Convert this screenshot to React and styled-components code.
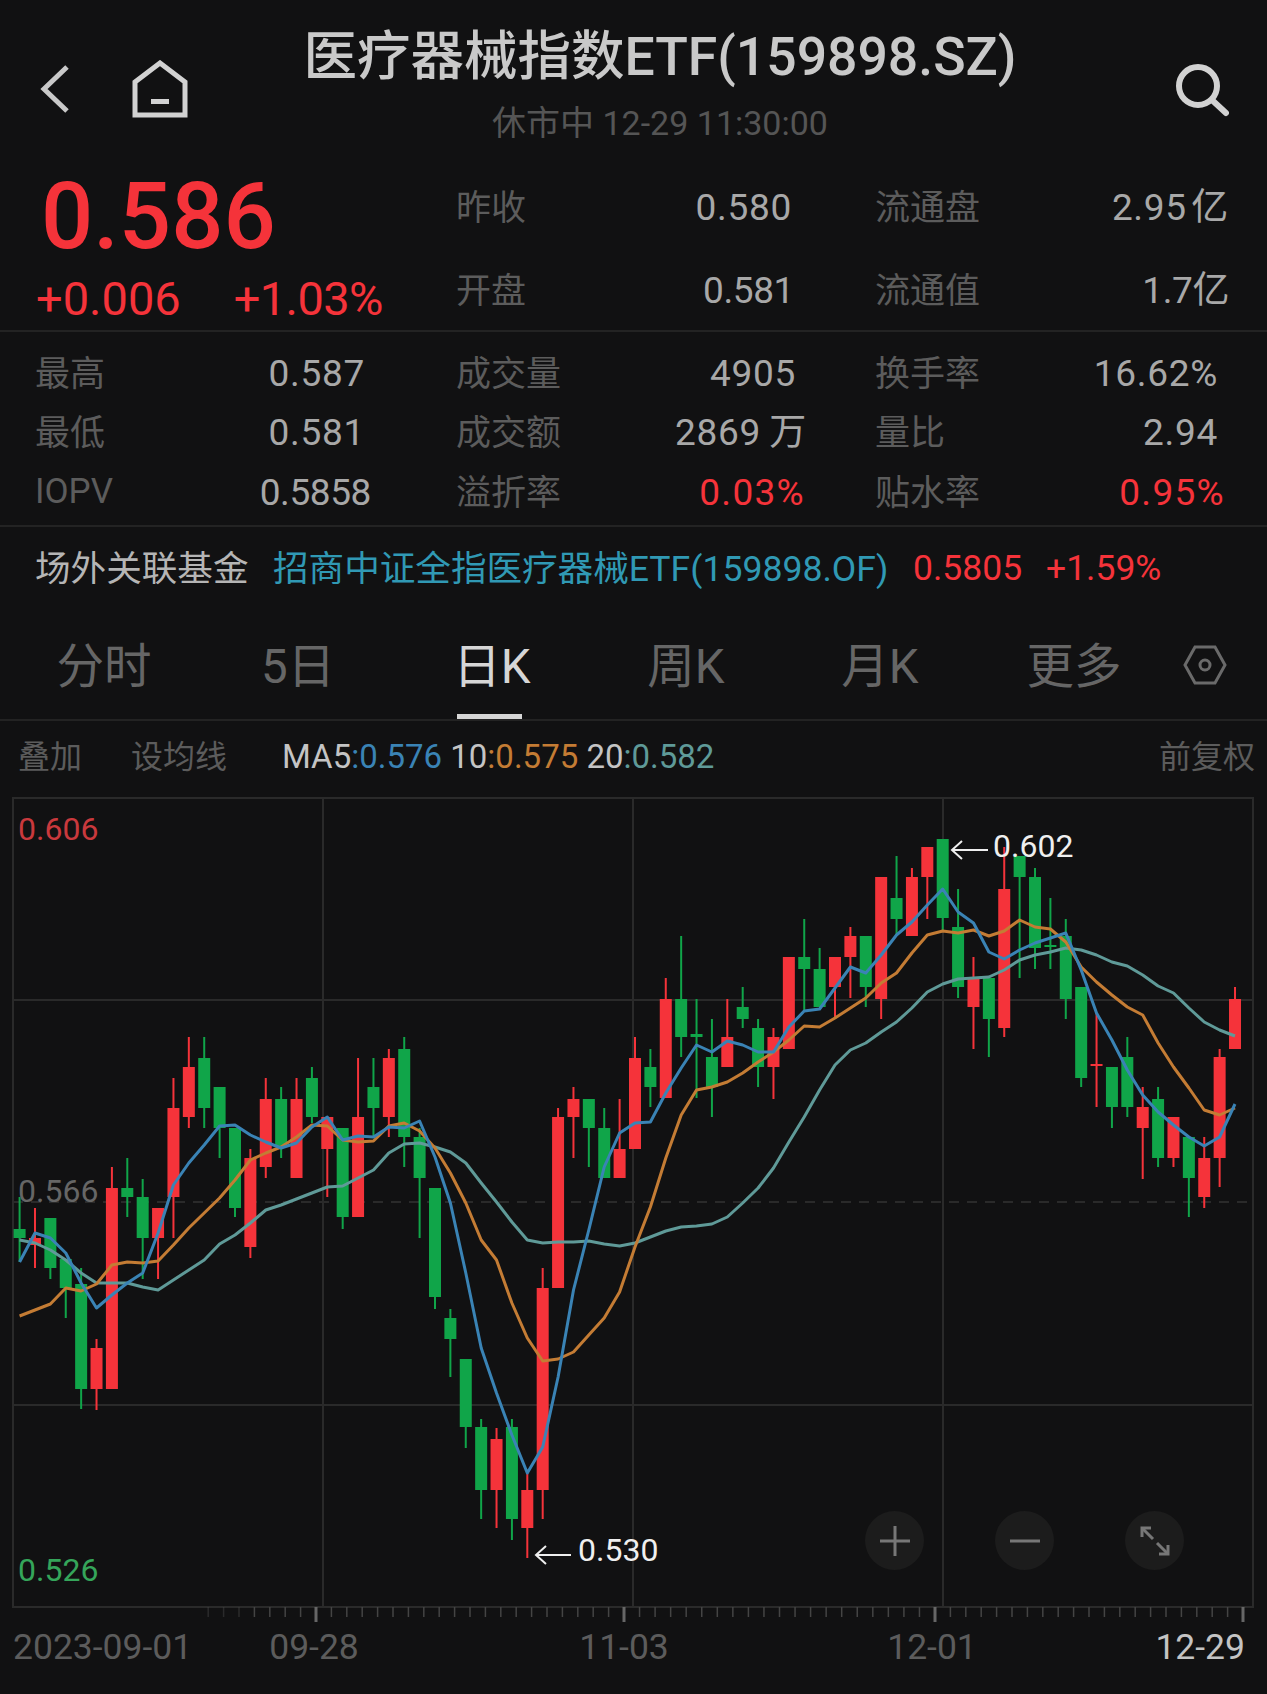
import styled, { createGlobalStyle } from 'styled-components';

const FONT = `Roboto, "Noto Sans CJK SC", sans-serif`;
const RED = '#f5333a';
const GREEN = '#10a549';
const BLUE = '#3a83b5';
const ORANGE = '#c47c34';
const TEAL = '#5f9a98';

// wickTop, bodyTop, bodyBottom, wickBottom, colour
const CANDLES = [
  [1197, 1229, 1238, 1262, 'g'], [1208, 1238, 1245, 1268, 'r'], [1218, 1218, 1268, 1279, 'g'], [1259, 1259, 1288, 1318, 'g'],
  [1268, 1284, 1389, 1409, 'g'], [1339, 1348, 1389, 1410, 'r'], [1167, 1188, 1389, 1389, 'r'], [1158, 1188, 1197, 1217, 'g'],
  [1179, 1197, 1238, 1279, 'g'], [1208, 1208, 1238, 1279, 'r'], [1078, 1108, 1197, 1238, 'r'], [1037, 1067, 1117, 1128, 'r'],
  [1037, 1058, 1108, 1128, 'g'], [1087, 1087, 1128, 1158, 'g'], [1128, 1128, 1208, 1217, 'g'], [1149, 1158, 1247, 1258, 'r'],
  [1078, 1099, 1167, 1178, 'r'], [1087, 1099, 1147, 1158, 'g'], [1078, 1099, 1178, 1178, 'r'], [1067, 1078, 1117, 1123, 'g'],
  [1117, 1117, 1149, 1197, 'r'], [1128, 1128, 1217, 1229, 'g'], [1058, 1117, 1217, 1217, 'r'], [1058, 1087, 1108, 1137, 'g'],
  [1049, 1058, 1117, 1137, 'r'], [1037, 1049, 1137, 1167, 'g'], [1128, 1137, 1178, 1238, 'g'], [1188, 1188, 1297, 1309, 'g'],
  [1309, 1318, 1339, 1377, 'g'], [1359, 1359, 1427, 1448, 'g'], [1419, 1427, 1490, 1519, 'g'], [1428, 1439, 1490, 1528, 'r'],
  [1419, 1427, 1519, 1540, 'g'], [1473, 1490, 1528, 1558, 'r'], [1268, 1288, 1490, 1519, 'r'], [1108, 1117, 1288, 1288, 'r'],
  [1087, 1099, 1117, 1158, 'r'], [1099, 1099, 1128, 1167, 'g'], [1108, 1128, 1178, 1178, 'g'], [1099, 1149, 1178, 1178, 'r'],
  [1037, 1058, 1149, 1149, 'r'], [1049, 1067, 1087, 1107, 'g'], [978, 999, 1098, 1098, 'r'], [936, 999, 1037, 1057, 'g'],
  [999, 1034, 1037, 1098, 'g'], [1019, 1057, 1087, 1117, 'g'], [999, 1037, 1067, 1067, 'r'], [987, 1007, 1019, 1028, 'g'],
  [1019, 1028, 1067, 1087, 'g'], [1028, 1037, 1067, 1099, 'r'], [957, 957, 1049, 1049, 'r'], [919, 957, 969, 1010, 'g'],
  [948, 969, 1007, 1007, 'g'], [957, 957, 987, 1017, 'r'], [927, 936, 957, 998, 'r'], [936, 936, 987, 1007, 'g'],
  [877, 877, 999, 1019, 'r'], [856, 898, 919, 936, 'g'], [868, 877, 936, 936, 'r'], [847, 847, 877, 919, 'r'],
  [839, 839, 918, 930, 'g'], [889, 927, 987, 998, 'g'], [957, 978, 1007, 1049, 'r'], [978, 978, 1019, 1057, 'g'],
  [847, 889, 1028, 1037, 'r'], [856, 856, 877, 978, 'g'], [868, 877, 948, 969, 'g'], [898, 945, 947, 969, 'g'],
  [919, 936, 999, 1019, 'g'], [987, 987, 1078, 1087, 'g'], [1013, 1064, 1066, 1107, 'r'], [1067, 1067, 1107, 1128, 'g'],
  [1037, 1057, 1107, 1117, 'g'], [1087, 1107, 1128, 1179, 'r'], [1087, 1099, 1158, 1167, 'g'], [1117, 1117, 1158, 1167, 'r'],
  [1137, 1137, 1178, 1217, 'g'], [1137, 1158, 1197, 1208, 'r'], [1049, 1057, 1158, 1187, 'r'], [987, 999, 1049, 1049, 'r'],
];

const MA5 = [1262, 1233, 1238, 1253, 1283, 1308, 1295, 1283, 1273, 1233, 1185, 1163, 1145, 1126, 1125, 1135, 1142, 1148, 1143, 1127, 1117, 1140, 1136, 1137, 1127, 1128, 1121, 1157, 1203, 1273, 1348, 1393, 1435, 1473, 1447, 1377, 1290, 1230, 1167, 1133, 1123, 1122, 1093, 1068, 1045, 1052, 1041, 1045, 1052, 1052, 1027, 1011, 1009, 988, 967, 973, 955, 935, 922, 905, 889, 912, 923, 952, 959, 950, 943, 938, 933, 970, 1013, 1040, 1070, 1095, 1112, 1125, 1137, 1146, 1137, 1104];
const MA10 = [1316, 1310, 1304, 1288, 1291, 1284, 1265, 1262, 1263, 1261, 1245, 1228, 1213, 1198, 1180, 1160, 1153, 1147, 1137, 1125, 1126, 1140, 1142, 1141, 1126, 1123, 1131, 1148, 1173, 1203, 1240, 1260, 1303, 1338, 1361, 1359, 1352, 1335, 1318, 1292, 1247, 1207, 1158, 1115, 1090, 1087, 1082, 1073, 1062, 1052, 1040, 1026, 1027, 1018, 1008, 998, 983, 973, 953, 935, 931, 933, 930, 936, 931, 920, 927, 929, 942, 967, 982, 995, 1007, 1015, 1043, 1067, 1088, 1110, 1115, 1108];
const MA20 = [1240, 1243, 1250, 1260, 1273, 1283, 1283, 1283, 1287, 1290, 1280, 1270, 1260, 1244, 1235, 1223, 1210, 1205, 1199, 1193, 1187, 1186, 1178, 1170, 1153, 1144, 1143, 1147, 1152, 1163, 1183, 1202, 1222, 1240, 1243, 1242, 1242, 1241, 1244, 1246, 1243, 1237, 1231, 1227, 1226, 1224, 1217, 1203, 1188, 1168, 1142, 1117, 1090, 1065, 1050, 1043, 1032, 1022, 1008, 992, 984, 979, 978, 977, 970, 960, 955, 952, 948, 950, 955, 962, 966, 975, 986, 993, 1008, 1022, 1030, 1036];

const candleX = (i) => 19.6 + 15.385 * i;
const linePoints = (values) => values.map((y, i) => `${candleX(i).toFixed(1)},${y}`).join(' ');

// the axis has a long tick every 20 sessions, the gaps are not quite even
const tickX = (k) => {
  if (k <= 20) return 1243 - 15.4 * k;
  if (k <= 40) return 935 - 15.55 * (k - 20);
  return 624 - 15.4 * (k - 40);
};

const TICKS = Array.from({ length: 68 }, (_, k) => ({
  x: tickX(k),
  big: k % 20 === 0,
}));

const GlobalStyle = createGlobalStyle`
  html, body {
    margin: 0;
    background: #111112;
  }
`;

const Page = styled.div`
  width: 1267px;
  height: 1694px;
  overflow: hidden;
  background: #111112;
  font-family: ${FONT};
  color: #a8a8a8;
`;

const Header = styled.header`
  display: flex;
  height: 158px;
`;

const NavLeft = styled.div`
  width: 300px;
  display: flex;
  align-items: flex-start;
  gap: 62px;
  padding: 60px 0 0 40px;
  box-sizing: border-box;
`;

const BackSvg = styled.svg`
  margin-top: 4px;
`;

const TitleBlock = styled.div`
  flex: 1;
  text-align: center;
  min-width: 0;
`;

const Title = styled.div`
  margin-top: 24px;
  font-size: 53.5px;
  line-height: 66px;
  font-weight: 500;
  color: #c9c9c9;
  white-space: nowrap;
`;

const Subtitle = styled.div`
  margin-top: 15px;
  font-size: 34px;
  line-height: 36px;
  color: #555;
  white-space: nowrap;
`;

const NavRight = styled.div`
  width: 247px;
  display: flex;
  justify-content: flex-end;
  align-items: flex-start;
  padding: 63px 38px 0 0;
  box-sizing: border-box;
`;

const TopBlock = styled.section`
  display: flex;
  height: 172px;
  border-bottom: 2px solid #232323;
`;

const PriceCol = styled.div`
  width: 456px;
  padding-left: 41px;
  box-sizing: border-box;
`;

const Price = styled.div`
  font-size: 92px;
  font-weight: 500;
  line-height: 100px;
  margin-top: 9px;
  color: ${RED};
`;

const ChangeRow = styled.div`
  display: flex;
  margin: 7px 0 0 -5px;
  gap: 53px;
  font-size: 47px;
  line-height: 50px;
  color: ${RED};

  span + span {
    letter-spacing: -0.6px;
  }
`;

const TopStats = styled.div`
  flex: 1;
  display: grid;
  grid-template-columns: 419px 1fr;
  grid-auto-rows: 83px;
  padding-top: 7px;
`;

const LowerStats = styled.section`
  display: grid;
  grid-template-columns: 421px 419px 1fr;
  grid-auto-rows: 59.5px;
  height: 182px;
  padding: 11px 0 0 35px;
  border-bottom: 2px solid #232323;
`;

const Stat = styled.div`
  display: flex;
  justify-content: space-between;
  align-items: center;
  padding-right: ${(p) => p.$end}px;
  font-size: 35px;
  white-space: nowrap;
`;

const StatLabel = styled.span`
  color: #5c5c5c;
  padding-bottom: ${(p) => (p.$latin ? 0 : 5)}px;
`;

const valueSpacing = (p) => {
  if (p.$red) return 1.3;
  return p.$narrow ? -0.4 : 0.7;
};

const StatValue = styled.span`
  color: ${(p) => (p.$red ? RED : '#a8a8a8')};
  font-size: 37px;
  line-height: 40px;
  letter-spacing: ${valueSpacing}px;
  padding-top: 2px;
`;

const FundRow = styled.section`
  display: flex;
  align-items: center;
  height: 85px;
  padding: 0 0 8px 35px;
  box-sizing: border-box;
  font-size: 35.6px;
  white-space: nowrap;
`;

const FundLabel = styled.span`
  width: 238px;
  color: #b5b5b5;
`;

const FundName = styled.span`
  width: 640px;
  color: #3099b4;
`;

const FundValue = styled.span`
  color: ${RED};
  font-size: 35.5px;
  padding-top: 4px;
  width: ${(p) => p.$width}px;
`;

const Tabs = styled.nav`
  display: flex;
  height: 109px;
  padding-left: 7px;
  border-bottom: 2px solid #232323;
  box-sizing: border-box;
  position: relative;
`;

const Tab = styled.div`
  width: 194px;
  display: flex;
  justify-content: center;
  padding-top: 24px;
  height: 107px;
  box-sizing: border-box;
  font-size: 47.5px;
  line-height: 62px;
  color: ${(p) => (p.$active ? '#d6d6d6' : '#666')};
  position: relative;

  &::after {
    content: '';
    display: ${(p) => (p.$active ? 'block' : 'none')};
    position: absolute;
    left: 62px;
    bottom: 0;
    width: 65px;
    height: 5px;
    background: #d6d6d6;
  }
`;

const TabIcon = styled.div`
  flex: 1;
  display: flex;
  justify-content: flex-end;
  padding: 33px 40px 0 0;
`;

const MaRow = styled.section`
  display: flex;
  align-items: center;
  height: 76px;
  padding: 0 12px 5px 18px;
  box-sizing: border-box;
  font-size: 32px;
  white-space: nowrap;
  color: #5c5c5c;
`;

const MaTool = styled.span`
  width: ${(p) => p.$width}px;
  padding-bottom: 5px;
`;

const MaValues = styled.span`
  flex: 1;
  font-size: 33px;
  color: #c4c4c4;
`;

const MaValue = styled.span`
  color: ${(p) => p.$color};
`;

const ChartWrap = styled.section`
  position: relative;
  height: 830px;
`;

const ChartSvg = styled.svg`
  display: block;
`;

const ScaleLabel = styled.span`
  position: absolute;
  left: 18px;
  top: ${(p) => p.$top}px;
  font-size: 32px;
  line-height: 36px;
  color: ${(p) => p.$color};
`;

const PeakLabel = styled.span`
  position: absolute;
  left: ${(p) => p.$left}px;
  top: ${(p) => p.$top}px;
  font-size: 32px;
  line-height: 36px;
  color: #efefef;
`;

const ZoomButtons = styled.div`
  position: absolute;
  left: 865px;
  top: 714px;
  display: flex;
  gap: 71px;
`;

const ZoomButton = styled.div`
  width: 59px;
  height: 59px;
  border-radius: 50%;
  background: #1c1c1c;
  display: flex;
  align-items: center;
  justify-content: center;
`;

const AxisRow = styled.div`
  display: flex;
  padding-left: 13px;
  font-size: 35.5px;
  line-height: 40px;
  color: #5c5c5c;
`;

const AxisLabel = styled.span`
  width: ${(p) => p.$width}px;
  text-align: ${(p) => p.$align || 'center'};
  color: ${(p) => p.$color || 'inherit'};
  white-space: nowrap;
`;

function BackIcon() {
  return (
    <BackSvg width="30" height="50" viewBox="0 0 30 50">
      <polyline points="27,3 4,25 27,47" fill="none" stroke="#c9c9c9" strokeWidth="5" />
    </BackSvg>
  );
}

function HomeIcon() {
  return (
    <svg width="56" height="58" viewBox="0 0 56 58">
      <path d="M3 55V22L28 3l25 19v33z" fill="none" stroke="#d2d2d2" strokeWidth="5" />
      <rect x="19" y="39" width="18" height="5" fill="#d2d2d2" />
    </svg>
  );
}

function SearchIcon() {
  return (
    <svg width="54" height="54" viewBox="0 0 54 54">
      <circle cx="23" cy="23" r="19" fill="none" stroke="#d2d2d2" strokeWidth="6" />
      <line x1="37" y1="37" x2="51" y2="50" stroke="#d2d2d2" strokeWidth="6" strokeLinecap="round" />
    </svg>
  );
}

function SettingIcon() {
  return (
    <svg width="44" height="40" viewBox="0 0 44 40">
      <polygon points="2,20 12,2 32,2 42,20 32,38 12,38" fill="none" stroke="#6a6a6a" strokeWidth="3" />
      <circle cx="22" cy="20" r="5" fill="none" stroke="#6a6a6a" strokeWidth="3" />
    </svg>
  );
}

function ExpandIcon() {
  return (
    <svg width="32" height="32" viewBox="0 0 32 32" fill="none" stroke="#777" strokeWidth="3">
      <polyline points="3,12 3,3 12,3" />
      <line x1="3" y1="3" x2="14" y2="14" />
      <polyline points="29,20 29,29 20,29" />
      <line x1="29" y1="29" x2="18" y2="18" />
    </svg>
  );
}

function Chart() {
  return (
    <ChartSvg width="1267" height="830" viewBox="0 797 1267 830">
      <rect x="13" y="798" width="1240" height="809" fill="none" stroke="#2a2a2a" strokeWidth="2" />
      <line x1="13" y1="1000" x2="1253" y2="1000" stroke="#2a2a2a" strokeWidth="2" />
      <line x1="13" y1="1405" x2="1253" y2="1405" stroke="#2a2a2a" strokeWidth="2" />
      <line x1="13" y1="1202" x2="1253" y2="1202" stroke="#2a2a2a" strokeWidth="2" strokeDasharray="10 8" />
      {[323, 633, 943].map((x) => (
        <line key={x} x1={x} y1="798" x2={x} y2="1607" stroke="#2a2a2a" strokeWidth="2" />
      ))}
      {TICKS.map((t) => (
        <line
          key={t.x}
          x1={t.x}
          y1="1607"
          x2={t.x}
          y2={t.big ? 1622 : 1617}
          stroke={t.big ? '#666' : '#444'}
          strokeWidth={t.big ? 3 : 1.5}
          opacity={t.x < 240 ? 0.5 : 1}
        />
      ))}
      {CANDLES.map(([wickTop, top, bottom, wickBottom, colour], i) => {
        const x = candleX(i);
        const fill = colour === 'r' ? RED : GREEN;
        return (
          <g key={i} fill={fill}>
            <rect x={x - 1} y={wickTop} width="2" height={wickBottom - wickTop} />
            <rect x={x - 6} y={top} width="12" height={bottom - top} />
          </g>
        );
      })}
      <polyline points={linePoints(MA20)} fill="none" stroke={TEAL} strokeWidth="3" strokeLinejoin="round" />
      <polyline points={linePoints(MA10)} fill="none" stroke={ORANGE} strokeWidth="3" strokeLinejoin="round" />
      <polyline points={linePoints(MA5)} fill="none" stroke={BLUE} strokeWidth="3" strokeLinejoin="round" />
      <path d="M988 850H952M962 841l-10 9 10 9" fill="none" stroke="#efefef" strokeWidth="2" />
      <path d="M571 1555H536M546 1546l-10 9 10 9" fill="none" stroke="#efefef" strokeWidth="2" />
    </ChartSvg>
  );
}

export default function App() {
  return (
    <Page>
      <GlobalStyle />
      <Header>
        <NavLeft>
          <BackIcon />
          <HomeIcon />
        </NavLeft>
        <TitleBlock>
          <Title>医疗器械指数ETF(159898.SZ)</Title>
          <Subtitle>休市中 12-29 11:30:00</Subtitle>
        </TitleBlock>
        <NavRight>
          <SearchIcon />
        </NavRight>
      </Header>

      <TopBlock>
        <PriceCol>
          <Price>0.586</Price>
          <ChangeRow>
            <span>+0.006</span>
            <span>+1.03%</span>
          </ChangeRow>
        </PriceCol>
        <TopStats>
          <Stat $end={83}><StatLabel>昨收</StatLabel><StatValue>0.580</StatValue></Stat>
          <Stat $end={38}><StatLabel>流通盘</StatLabel><StatValue>2.95&#8202;亿</StatValue></Stat>
          <Stat $end={81}><StatLabel>开盘</StatLabel><StatValue $narrow>0.581</StatValue></Stat>
          <Stat $end={38}><StatLabel>流通值</StatLabel><StatValue $narrow>1.7亿</StatValue></Stat>
        </TopStats>
      </TopBlock>

      <LowerStats>
        <Stat $end={91}><StatLabel>最高</StatLabel><StatValue>0.587</StatValue></Stat>
        <Stat $end={79}><StatLabel>成交量</StatLabel><StatValue>4905</StatValue></Stat>
        <Stat $end={49}><StatLabel>换手率</StatLabel><StatValue>16.62%</StatValue></Stat>
        <Stat $end={91}><StatLabel>最低</StatLabel><StatValue>0.581</StatValue></Stat>
        <Stat $end={68}><StatLabel>成交额</StatLabel><StatValue>2869&#8201;万</StatValue></Stat>
        <Stat $end={49}><StatLabel>量比</StatLabel><StatValue>2.94</StatValue></Stat>
        <Stat $end={85}><StatLabel $latin>IOPV</StatLabel><StatValue $narrow>0.5858</StatValue></Stat>
        <Stat $end={70}><StatLabel>溢折率</StatLabel><StatValue $red>0.03%</StatValue></Stat>
        <Stat $end={42}><StatLabel>贴水率</StatLabel><StatValue $red>0.95%</StatValue></Stat>
      </LowerStats>

      <FundRow>
        <FundLabel>场外关联基金</FundLabel>
        <FundName>招商中证全指医疗器械ETF(159898.OF)</FundName>
        <FundValue $width={133}>0.5805</FundValue>
        <FundValue $width={120}>+1.59%</FundValue>
      </FundRow>

      <Tabs>
        <Tab>分时</Tab>
        <Tab>5日</Tab>
        <Tab $active>日K</Tab>
        <Tab>周K</Tab>
        <Tab>月K</Tab>
        <Tab>更多</Tab>
        <TabIcon><SettingIcon /></TabIcon>
      </Tabs>

      <MaRow>
        <MaTool $width={113}>叠加</MaTool>
        <MaTool $width={151}>设均线</MaTool>
        <MaValues>
          MA5<MaValue $color={BLUE}>:0.576</MaValue> 10<MaValue $color={ORANGE}>:0.575</MaValue> 20<MaValue $color={TEAL}>:0.582</MaValue>
        </MaValues>
        <MaTool $width={96}>前复权</MaTool>
      </MaRow>

      <ChartWrap>
        <Chart />
        <ScaleLabel $top={14} $color="#c9393d">0.606</ScaleLabel>
        <ScaleLabel $top={376} $color="#666">0.566</ScaleLabel>
        <ScaleLabel $top={755} $color="#35a55a">0.526</ScaleLabel>
        <PeakLabel $left={993} $top={31}>0.602</PeakLabel>
        <PeakLabel $left={578} $top={735}>0.530</PeakLabel>
        <ZoomButtons>
          <ZoomButton>
            <svg width="32" height="32" viewBox="0 0 32 32" stroke="#777" strokeWidth="3">
              <line x1="1" y1="16" x2="31" y2="16" />
              <line x1="16" y1="1" x2="16" y2="31" />
            </svg>
          </ZoomButton>
          <ZoomButton>
            <svg width="32" height="32" viewBox="0 0 32 32" stroke="#777" strokeWidth="3">
              <line x1="1" y1="16" x2="31" y2="16" />
            </svg>
          </ZoomButton>
          <ZoomButton>
            <ExpandIcon />
          </ZoomButton>
        </ZoomButtons>
      </ChartWrap>

      <AxisRow>
        <AxisLabel $width={190} $align="left">2023-09-01</AxisLabel>
        <AxisLabel $width={222}>09-28</AxisLabel>
        <AxisLabel $width={398}>11-03</AxisLabel>
        <AxisLabel $width={218}>12-01</AxisLabel>
        <AxisLabel $width={204} $align="right" $color="#c4c4c4">12-29</AxisLabel>
      </AxisRow>
    </Page>
  );
}
